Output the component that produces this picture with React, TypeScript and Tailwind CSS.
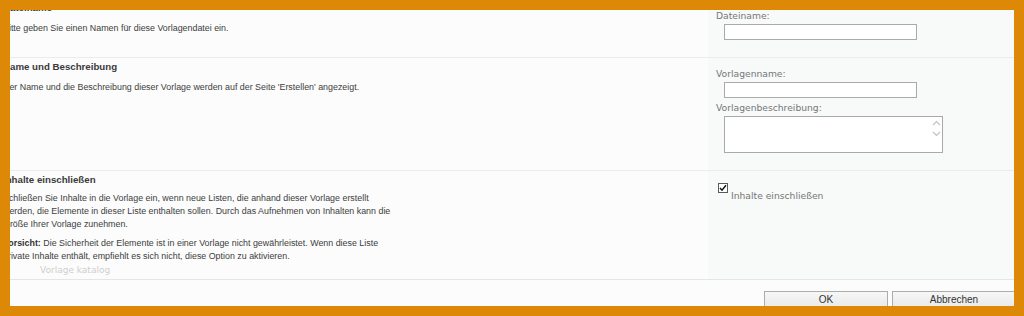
export default function App() {
  const left = "font-['Liberation_Sans',Arial,sans-serif] text-[8.9px] leading-[12px] text-[#404040]";
  const head = "font-['Liberation_Sans',Arial,sans-serif] text-[9.7px] leading-[12px] font-bold text-[#3a3a3a]";
  const label = "font-['DejaVu_Sans',Verdana,sans-serif] text-[9.2px] leading-[12px] text-[#767676]";

  return (
    <div className="w-[1024px] h-[316px] bg-[#de8807] p-[10px]">
      <div className="h-full w-full overflow-hidden bg-[#fbfcfb]">
        <div className="-mt-[12px] -ml-[7px] w-[1011px] flex flex-col">
          {/* Dateiname */}
          <div className="flex h-[60px] border-b border-[#ebecec]">
            <div className="w-[705px] pt-[4px]">
              <div className={head}>Dateiname</div>
              <div className={`${left} mt-[8px]`}>Bitte geben Sie einen Namen für diese Vorlagendatei ein.</div>
            </div>
            <div className="flex-1 bg-[#f8f9f9] pt-[12px] pl-[8px]">
              <div className={label}>Dateiname:</div>
              <div className="mt-[2px] ml-[8px] w-[193px] h-[16px] border border-[#a9a9a9] bg-white" />
            </div>
          </div>

          {/* Name und Beschreibung */}
          <div className="flex h-[113px] border-b border-[#ebecec]">
            <div className="w-[705px] pt-[3px]">
              <div className={head}>Name und Beschreibung</div>
              <div className={`${left} mt-[8px]`}>
                Der Name und die Beschreibung dieser Vorlage werden auf der Seite 'Erstellen' angezeigt.
              </div>
            </div>
            <div className="flex-1 bg-[#f8f9f9] pt-[10px] pl-[8px]">
              <div className={label}>Vorlagenname:</div>
              <div className="mt-[2px] ml-[8px] w-[193px] h-[16px] border border-[#a9a9a9] bg-white" />
              <div className={`${label} mt-[4px]`}>Vorlagenbeschreibung:</div>
              <div className="mt-[2px] ml-[8px] w-[219px] h-[37px] border border-[#a9a9a9] bg-white flex justify-end">
                <div className="w-[12px] flex flex-col items-center pt-[3px] gap-[5px]">
                  <svg width="9" height="6" viewBox="0 0 9 6">
                    <path d="M1 5 L4.5 1.5 L8 5" fill="none" stroke="#c3c3c3" strokeWidth="1.2" />
                  </svg>
                  <svg width="9" height="6" viewBox="0 0 9 6">
                    <path d="M1 1 L4.5 4.5 L8 1" fill="none" stroke="#c3c3c3" strokeWidth="1.2" />
                  </svg>
                </div>
              </div>
            </div>
          </div>

          {/* Inhalte einschließen */}
          <div className="flex h-[109px] border-b border-[#e4e5e5]">
            <div className="w-[705px] pt-[3px]">
              <div className={head}>Inhalte einschließen</div>
              <div className={`${left} leading-[13px] mt-[6px] whitespace-nowrap`}>
                Schließen Sie Inhalte in die Vorlage ein, wenn neue Listen, die anhand dieser Vorlage erstellt
                <br />
                werden, die Elemente in dieser Liste enthalten sollen. Durch das Aufnehmen von Inhalten kann die
                <br />
                Größe Ihrer Vorlage zunehmen.
              </div>
              <div className={`${left} leading-[13px] mt-[6px] whitespace-nowrap`}>
                <span className="font-bold text-[#333]">Vorsicht:</span> Die Sicherheit der Elemente ist in einer
                Vorlage nicht gewährleistet. Wenn diese Liste
                <br />
                private Inhalte enthält, empfiehlt es sich nicht, diese Option zu aktivieren.
              </div>
              <div className={`${label} text-[9px] leading-[13px] mt-[1px] pl-[37px] text-[#cfcfcf]`}>
                Vorlage katalog
              </div>
            </div>
            <div className="flex-1 bg-[#f8f9f9] pt-[12px] pl-[10px] flex items-start">
              <div className="w-[10px] h-[10px] border border-[#5a5a5a] bg-white flex items-center justify-center">
                <svg width="8" height="8" viewBox="0 0 8 8">
                  <path d="M1 4 L3 6.2 L7 1.3" fill="none" stroke="#111" strokeWidth="1.5" />
                </svg>
              </div>
              <div className={`${label} mt-[7px] ml-[3px]`}>Inhalte einschließen</div>
            </div>
          </div>

          {/* Buttons */}
          <div className="flex pt-[11px] pl-[761px] gap-[4px]">
            {["OK", "Abbrechen"].map((t) => (
              <div
                key={t}
                className="w-[124px] h-[23px] shrink-0 border border-[#acacac] bg-linear-to-b from-[#f7f7f7] to-[#e4e4e4] text-center pt-[2px] font-['Liberation_Sans',Arial,sans-serif] text-[10px] leading-[12px] text-[#333]"
              >
                {t}
              </div>
            ))}
          </div>
        </div>
      </div>
    </div>
  );
}
